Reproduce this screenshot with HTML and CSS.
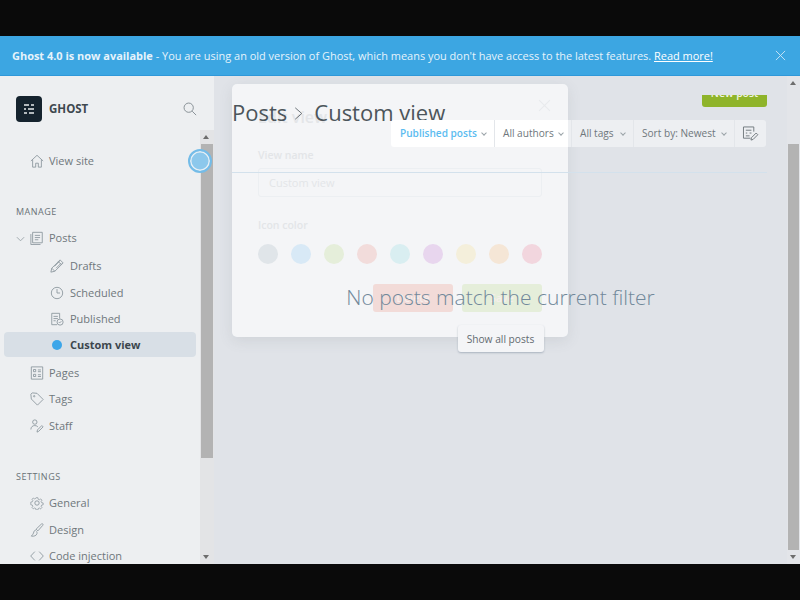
FILE: index.html
```html
<!DOCTYPE html>
<html lang="en">
<head>
    <meta charset="UTF-8">
    <title>Ghost - Custom view</title>
    <link rel="stylesheet" href="styles.css">
</head>
<body>
    <div class="letterbox"></div>
    <div class="banner">
        <p><strong>Ghost 4.0 is now available</strong> - You are using an old version of Ghost, which means you don't have access to the latest features. <a href="#">Read more!</a></p>
        <svg class="banner-close" viewBox="0 0 12 12"><path d="M1 1l10 10M11 1L1 11"/></svg>
    </div>

    <div class="app">
        <aside class="sidebar">
            <div class="side-panel">
                <div class="brand">
                    <span class="logo">
                        <svg viewBox="0 0 26 26"><path d="M8 9h5M15 9h3M8 13h2M12 13h6M8 17h3M13 17h5"/></svg>
                    </span>
                    <span class="brand-name">GHOST</span>
                    <svg class="search" viewBox="0 0 16 16"><circle cx="6.5" cy="6.5" r="5.3"/><path d="M10.5 10.5l4.5 4.5"/></svg>
                </div>
                <nav class="nav">
                    <a class="row" href="#">
                        <svg class="ico" viewBox="0 0 16 16"><path d="M1 8l7-6.500L15 8M3 6.500V15h3.500v-4.500h3V15H13V6.500"/></svg>View site
                    </a>

                    <h4 class="nav-title">Manage</h4>
                    <a class="row" href="#">
                        <svg class="caret" viewBox="0 0 10 6"><path d="M1 1l4 4 4-4"/></svg>
                        <svg class="ico" viewBox="0 0 16 16"><path d="M3 1.500h11v12H3zM1 3.500v12h11M5.500 5h6M5.500 7.500h6M5.500 10h4"/></svg>Posts
                    </a>
                    <div class="sub">
                        <a class="row" href="#">
                            <svg class="ico" viewBox="0 0 16 16"><path d="M1 15l1-4.500L11.500 1 15 4.500 5.500 14zM2 10.500L5.500 14M9.500 3l3.500 3.500M5 8.500L11 2.500M7 10.500l6-6"/></svg>Drafts
                        </a>
                        <a class="row" href="#">
                            <svg class="ico" viewBox="0 0 16 16"><circle cx="8" cy="8" r="6.500"/><path d="M8 3.500V8h3.500"/></svg>Scheduled
                        </a>
                        <a class="row" href="#">
                            <svg class="ico" viewBox="0 0 16 16"><path d="M8 14.500H2v-13h9v6M4 5h5M4 7.500h5M4 10h2.500"/><circle cx="11.500" cy="11.500" r="3.500"/><path d="M10 11.500l1 1 2-2"/></svg>Published
                        </a>
                        <a class="row current" href="#">
                            <span class="view-dot"></span>Custom view
                        </a>
                    </div>
                    <a class="row" href="#">
                        <svg class="ico" viewBox="0 0 16 16"><path d="M1.500 1h13v14h-13zM4 4h2.500v2.500H4zM4 9.500h2.500V12H4zM9 4.500h3.500M9 6.500h3.500M9 10h3.500M9 12h3.500"/></svg>Pages
                    </a>
                    <a class="row" href="#">
                        <svg class="ico" viewBox="0 0 16 16"><path d="M1 2.500L2.500 1 8 1.500l7 7L8.500 15l-7-7z"/><circle cx="4.800" cy="4.800" r=".8"/></svg>Tags
                    </a>
                    <a class="row" href="#">
                        <svg class="ico" viewBox="0 0 16 16"><circle cx="5.500" cy="3.500" r="2.500"/><path d="M1 12c0-3 2-4.500 4.500-4.500 1.500 0 2.500.5 3.500 1.500M8 15l.5-2.500 5-5 1.500 1.500-5 5z"/></svg>Staff
                    </a>

                    <h4 class="nav-title">Settings</h4>
                    <a class="row" href="#">
                        <svg class="ico" viewBox="0 0 16 16"><circle cx="8" cy="8" r="2.500"/><path d="M6.800 1h2.400l.4 2 1.600.7 1.700-1.100 1.700 1.700-1.100 1.700.7 1.600 2 .4v2.400l-2 .4-.7 1.600 1.100 1.700-1.700 1.700-1.700-1.100-1.600.7-.4 2H6.800l-.4-2-1.600-.7-1.700 1.100-1.700-1.700 1.100-1.700-.7-1.600-2-.4V6.800l2-.4.7-1.600-1.100-1.700 1.700-1.700 1.700 1.100 1.600-.7z" transform="translate(1.100 1.100) scale(.86)"/></svg>General
                    </a>
                    <a class="row" href="#">
                        <svg class="ico" viewBox="0 0 16 16"><path d="M14.500 1c.5.500.5 1 0 1.800L9 9 7 7l5.700-5.500c.7-.6 1.300-1 1.800-.5zM7 8c-2 0-2.500 1.500-3 3.500-.3 1.500-1.500 2-2.500 3.500 3 .5 6-.5 6.500-3 .2-1-.1-1.800-.5-2.500"/></svg>Design
                    </a>
                    <a class="row" href="#">
                        <svg class="ico" viewBox="0 0 16 16"><path d="M5.500 3L.8 8l4.700 5M10.500 3l4.700 5-4.700 5"/></svg>Code injection
                    </a>
                </nav>
            </div>
            <div class="bar side-bar">
                <span class="arrow up"></span>
                <span class="track"><span class="thumb"></span></span>
                <span class="arrow down"></span>
            </div>
            <span class="tour-dot"></span>
        </aside>

        <div class="stage">
            <main class="content">
                <header class="head">
                    <h2 class="title">
                        <span>Posts</span>
                        <svg class="crumb" viewBox="0 0 10 16"><path d="M1 1l8 7-8 7"/></svg>
                        <span>Custom view</span>
                    </h2>
                    <div class="new-post"><span>New post</span></div>
                    <div class="filters">
                        <button class="filter active w-status">Published posts</button>
                        <button class="filter w-authors">All authors</button>
                        <button class="filter w-tags">All tags</button>
                        <button class="filter w-sort">Sort by: Newest</button>
                        <button class="filter-edit">
                            <svg viewBox="0 0 18 16"><path d="M9 13H1.500V1h11v5M4 4.500h6M4 7.500h1.500M8 7.500h2M4 10.500h4"/><path d="M9.500 15l.5-2.500 5-5 1.800 1.800-5 5z"/></svg>
                        </button>
                    </div>
                </header>
                <div class="empty">
                    <h3>No posts match the current filter</h3>
                    <button class="show-all">Show all posts</button>
                </div>
            </main>

            <div class="bar main-bar">
                <span class="arrow up"></span>
                <span class="track"><span class="thumb"></span></span>
                <span class="arrow down"></span>
            </div>

            <section class="modal">
                <svg class="modal-close" viewBox="0 0 12 12"><path d="M1 1l10 10M11 1L1 11"/></svg>
                <h3>Edit view</h3>
                <label>View name</label>
                <div class="input">Custom view</div>
                <label class="color-label">Icon color</label>
                <div class="swatches">
                    <span class="swatch c-grey"></span>
                    <span class="swatch c-blue"></span>
                    <span class="swatch c-green"></span>
                    <span class="swatch c-red"></span>
                    <span class="swatch c-teal"></span>
                    <span class="swatch c-purple"></span>
                    <span class="swatch c-yellow"></span>
                    <span class="swatch c-orange"></span>
                    <span class="swatch c-pink"></span>
                </div>
                <div class="modal-actions">
                    <button class="btn-delete">Delete</button>
                    <button class="btn-save">Save</button>
                </div>
            </section>
        </div>
    </div>
    <div class="letterbox"></div>
</body>
</html>
```

FILE: styles.css
```css
*{
    box-sizing: border-box;
}

html, body{
    margin: 0;
    padding: 0;
    height: 600px;
    overflow: hidden;
}

body{
    display: flex;
    flex-direction: column;
    background-color: #0a0a0a;
    font-family: "Open Sans", "Noto Sans", sans-serif;
    color: #6f777c;
}

button{
    font-family: inherit;
}

svg{
    fill: none;
    stroke: currentColor;
    stroke-width: 1;
}

.letterbox{
    height: 36px;
    flex: none;
    background-color: #0a0a0a;
}

/* banner */
.banner{
    height: 40px;
    flex: none;
    display: flex;
    align-items: center;
    justify-content: space-between;
    padding: 0 14px 0 12px;
    background-color: #3ca6e2;
    border-bottom: 1px solid #2f98d9;
    color: #e6f3fb;
    font-size: 10.960px;
}

.banner p{
    margin: 0;
}

.banner strong{
    font-weight: 700;
}

.banner a{
    color: #fff;
}

.banner-close{
    width: 11px;
    height: 11px;
    color: #cde6f6;
}

/* layout */
.app{
    flex: 1;
    display: flex;
    min-height: 0;
    background-color: #e0e3e8;
}

.sidebar{
    position: relative;
    width: 214px;
    flex: none;
    display: flex;
    background-color: #edeff1;
}

.side-panel{
    width: 200px;
    background-color: #edeff1;
    overflow: hidden;
}

.brand{
    height: 54px;
    display: flex;
    align-items: center;
    padding: 12px 0 0 16px;
}

.logo{
    width: 26px;
    height: 26px;
    border-radius: 4px;
    background-color: #15232e;
    color: #e8ebed;
}

.logo svg{
    display: block;
    width: 26px;
    height: 26px;
    stroke-width: 1.6;
}

.brand-name{
    margin: 0 0 1px 7px;
    font-size: 11.500px;
    font-weight: 700;
    color: #3e484f;
}

.search{
    width: 14px;
    height: 14px;
    margin-left: 95px;
    color: #7d868c;
}

/* nav */
.nav{
    padding: 17px 4px 0;
}

.row{
    display: flex;
    align-items: center;
    height: 26.500px;
    padding-left: 45px;
    position: relative;
    border-radius: 4px;
    font-size: 11px;
    color: #6f777c;
    text-decoration: none;
}

.row .ico{
    position: absolute;
    left: 26px;
    top: 6.500px;
    width: 14px;
    height: 14px;
    color: #8c979e;
}

.caret{
    position: absolute;
    left: 12px;
    top: 11px;
    width: 9px;
    height: 6px;
    color: #9aa3a8;
}

.nav-title{
    margin: 31.500px 0 0 12px;
    height: 19.500px;
    font-size: 9px;
    font-weight: 400;
    letter-spacing: .5px;
    text-transform: uppercase;
    color: #697176;
}

.sub{
    margin: 1.500px 0 2px;
}

.sub .row{
    padding-left: 66px;
}

.sub .row .ico{
    left: 46px;
}

.row.current{
    height: 25px;
    margin-bottom: 1.500px;
    padding-left: 66px;
    background-color: #d8dfe6;
    font-weight: 700;
    color: #3c464d;
}

.view-dot{
    position: absolute;
    left: 48px;
    top: 8px;
    width: 10px;
    height: 10px;
    border-radius: 50%;
    background-color: #3ca6e9;
}

.tour-dot{
    position: absolute;
    left: 188px;
    top: 73px;
    width: 24px;
    height: 24px;
    border-radius: 50%;
    background-color: #8cc8ec;
    border: 2px solid #74bce8;
    box-shadow: inset 0 0 0 1.500px #e6eff5;
}

/* scrollbars */
.bar{
    flex: none;
    display: flex;
    flex-direction: column;
    width: 14px;
}

.side-bar{
    margin-top: 54px;
    background-color: #e3e4e6;
}

.main-bar{
    position: relative;
    width: 13px;
    background-color: #e3e5e9;
}

.track{
    flex: 1;
    display: flex;
    flex-direction: column;
    padding: 0 1px;
}

.thumb{
    background-color: #b3b3b3;
}

.side-bar .thumb{
    height: 314px;
}

.main-bar .track{
    padding-top: 54px;
}

.main-bar .thumb{
    height: 406px;
}

.arrow{
    height: 14px;
    flex: none;
    position: relative;
}

.arrow::after{
    content: "";
    position: absolute;
    left: 3px;
    top: 5px;
    border-left: 3.500px solid transparent;
    border-right: 3.500px solid transparent;
}

.arrow.up::after{
    border-bottom: 4px solid #6d6d6d;
}

.arrow.down::after{
    border-top: 4px solid #6d6d6d;
}

/* main area */
.stage{
    position: relative;
    flex: 1;
    display: flex;
    min-width: 0;
}

.content{
    position: relative;
    z-index: 1;
    flex: 1;
    min-width: 0;
    padding: 0 20px 0 18px;
}

.head{
    height: 97px;
    display: grid;
    grid-template-columns: minmax(0, 1fr) auto;
    grid-template-rows: 12px 27px;
    row-gap: 13px;
    align-content: start;
    padding-top: 19px;
    border-bottom: 1px solid #d3e1ec;
}

.title{
    grid-row: 1 / 3;
    grid-column: 1;
    align-self: start;
    display: flex;
    align-items: center;
    margin: -1px 0 0;
    height: 36px;
    font-size: 22px;
    font-weight: 400;
    color: #4c555b;
    white-space: nowrap;
}

.crumb{
    flex: none;
    width: 9px;
    height: 13px;
    margin: 2px 11px 0 7px;
    color: #4c555b;
}

.new-post{
    grid-row: 1;
    grid-column: 2;
    justify-self: end;
    width: 65px;
    height: 12px;
    overflow: hidden;
    border-radius: 0 0 3px 3px;
    background-color: #8fb42a;
    color: #f0f5e0;
    font-size: 10.400px;
    font-weight: 600;
    text-align: center;
}

.new-post span{
    display: block;
    margin-top: -9px;
}

.filters{
    grid-row: 2;
    grid-column: 2;
    display: flex;
    width: 375px;
    margin-right: 1px;
    border-radius: 3px;
    background: linear-gradient(to right, #fff 177px, #edeff2 177px);
}

.filter, .filter-edit{
    height: 27px;
    padding: 0 0 2px 8px;
    border: 0;
    border-right: 1px solid #e3e6ea;
    background: none;
    font-size: 10.100px;
    color: #6f777c;
    text-align: left;
    position: relative;
}

.filter::after{
    content: "";
    position: absolute;
    right: 8px;
    top: 11px;
    width: 3px;
    height: 3px;
    border-right: 1px solid #9aa3a8;
    border-bottom: 1px solid #9aa3a8;
    transform: rotate(45deg);
}

.filter.active{
    padding-left: 9px;
    color: #5bbcf0;
    font-weight: 600;
}

.w-status{
    width: 104px;
}

.w-authors{
    width: 77px;
}

.w-tags{
    width: 62px;
}

.w-sort{
    width: 101px;
}

.filter-edit{
    flex: 1;
    padding: 0;
    border: 0;
    color: #6f777c;
}

.filter-edit svg{
    display: block;
    width: 17px;
    height: 15px;
    margin: 0 auto;
}

.empty{
    display: flex;
    flex-direction: column;
    align-items: center;
    padding: 109px 0 0 2px;
}

.empty h3{
    margin: 0;
    height: 30px;
    line-height: 30px;
    font-size: 21px;
    font-weight: 300;
    color: #71889a;
}

.show-all{
    width: 86px;
    height: 27px;
    margin-top: 13px;
    padding: 0;
    border: 0;
    border-radius: 3px;
    background-color: #f4f5f7;
    box-shadow: 0 1px 2px rgba(90, 110, 130, .4);
    font-size: 10.200px;
    color: #626a70;
}

/* modal fading in behind the page */
.modal{
    position: absolute;
    left: 18px;
    top: 8px;
    width: 336px;
    height: 253px;
    padding: 25px 26px 0;
    border-radius: 5px;
    background-color: #f4f5f7;
    box-shadow: 0 4px 14px rgba(90, 100, 110, .12);
    color: #e3e5e8;
}

.modal h3{
    margin: 0;
    height: 20px;
    font-size: 16px;
    font-weight: 600;
    line-height: 16px;
}

.modal label{
    display: block;
    margin-top: 19px;
    height: 20px;
    line-height: 14px;
    font-size: 10.500px;
    font-weight: 600;
}

.modal-close{
    position: absolute;
    right: 17px;
    top: 15px;
    width: 13px;
    height: 13px;
    color: #e8eaed;
}

.input{
    height: 29px;
    line-height: 27px;
    padding-left: 10px;
    border: 1px solid #eceff2;
    border-radius: 3px;
    font-size: 11px;
}

.modal .color-label{
    margin-top: 21px;
    height: 18px;
}

.swatches{
    display: flex;
    justify-content: space-between;
    margin-top: 8px;
}

.swatch{
    width: 20px;
    height: 20px;
    border-radius: 50%;
}

.c-grey{ background-color: #e0e5e9; }
.c-blue{ background-color: #d8e9f6; }
.c-green{ background-color: #e5eeda; }
.c-red{ background-color: #f2dcdb; }
.c-teal{ background-color: #d9eef1; }
.c-purple{ background-color: #e8d6ee; }
.c-yellow{ background-color: #f4efdb; }
.c-orange{ background-color: #f5e6d6; }
.c-pink{ background-color: #f2d6de; }

.modal-actions{
    display: flex;
    justify-content: flex-end;
    gap: 9px;
    margin-top: 20px;
}

.modal-actions button{
    width: 80px;
    height: 28px;
    padding: 0;
    border: 0;
    border-radius: 3px;
    font-size: 10.500px;
    font-weight: 600;
    color: #f6eeec;
}

.btn-delete{
    background-color: #f2dbd8;
}

.btn-save{
    background-color: #e5eeda;
}
```
